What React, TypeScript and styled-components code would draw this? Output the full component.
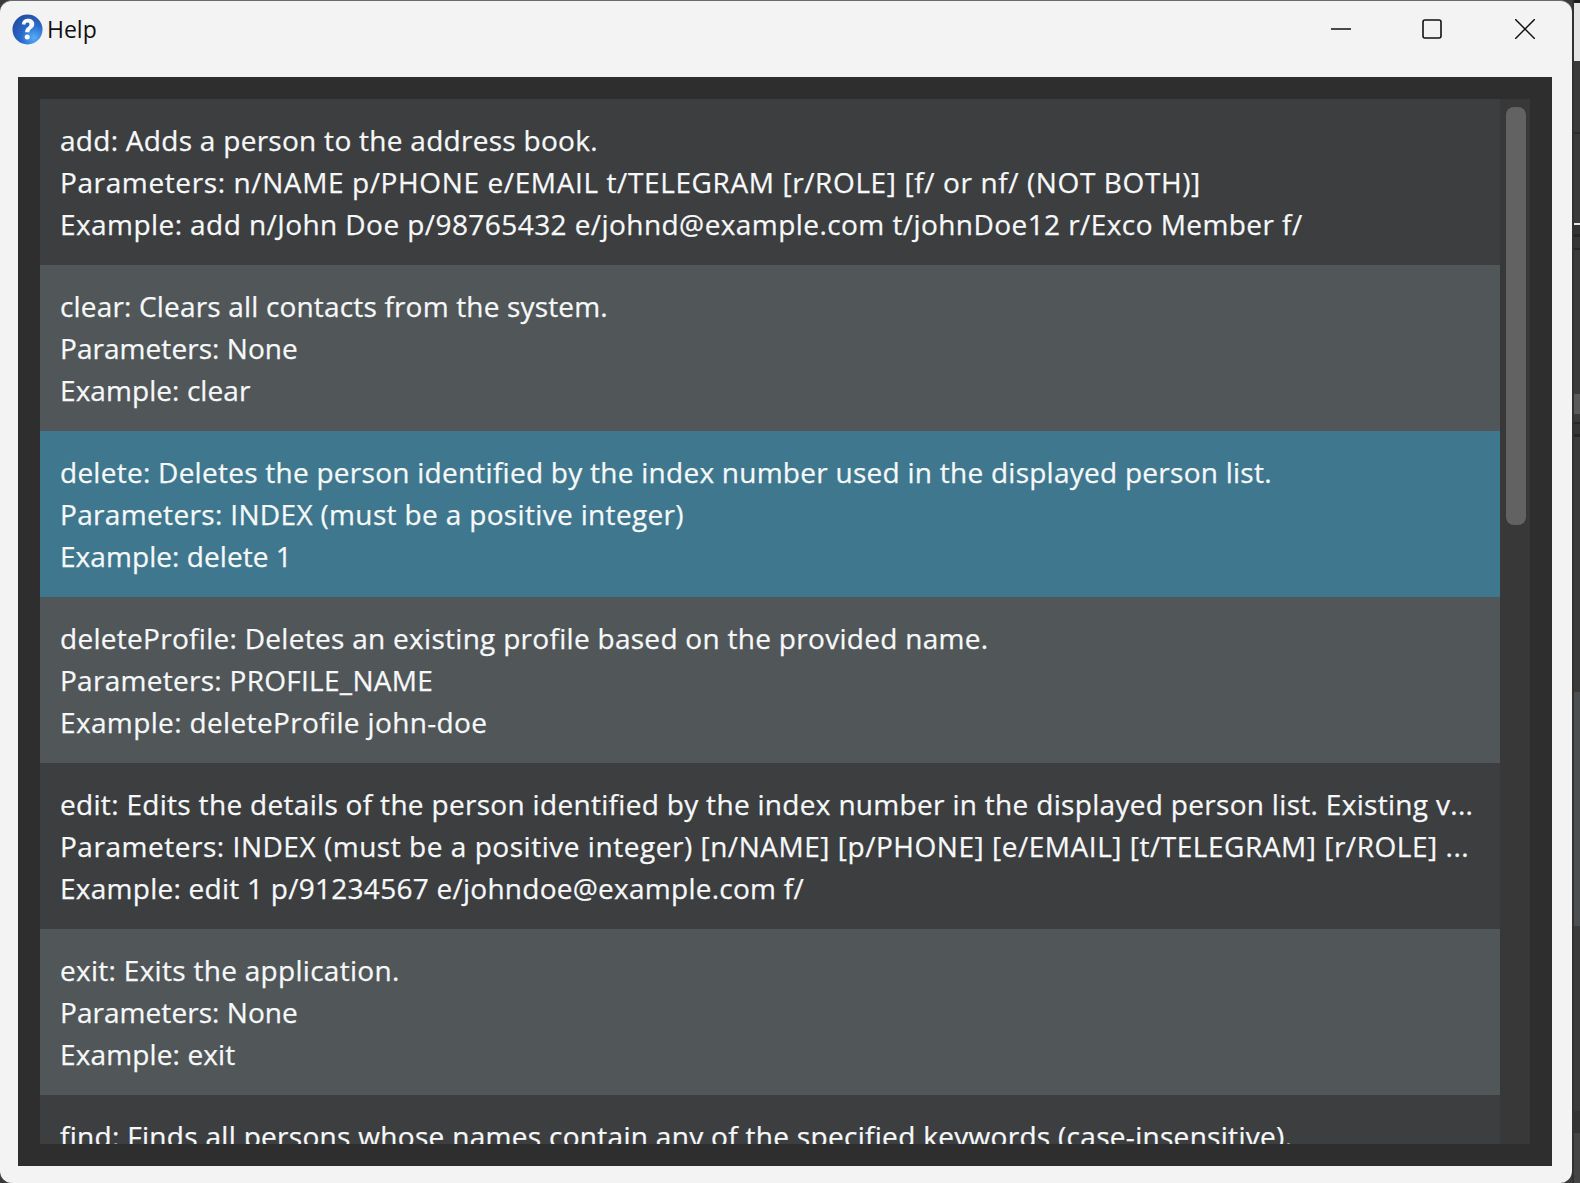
import React from "react";
import styled, { createGlobalStyle } from "styled-components";

const Global = createGlobalStyle`
  html, body { margin: 0; padding: 0; background: #3a3a3a; }
  body { width: 1580px; height: 1183px; overflow: hidden; }
`;

const Desktop = styled.div`
  width: 1580px;
  height: 1183px;
  background: #3a3a3a;
  display: flex;
`;

const Win = styled.div`
  width: 1572px;
  height: 1183px;
  background: #f3f3f3;
  border-radius: 12px;
  border-top: 1px solid #6b6b6b;
  box-sizing: border-box;
  display: flex;
  flex-direction: column;
  overflow: hidden;
`;

const TitleBar = styled.div`
  height: 56px;
  display: flex;
  align-items: center;
  padding-left: 12px;
  flex: none;
`;

const Title = styled.span`
  font: 23px "Open Sans", sans-serif;
  color: #111;
  margin-left: 4px;
  flex: 1;
`;

const Controls = styled.div`
  display: flex;
  align-items: center;
  padding-right: 37px;
`;

const Control = styled.svg<{ $gap?: number }>`
  display: block;
  width: 20px;
  height: 20px;
  margin-left: ${(p) => p.$gap ?? 0}px;
`;

const Panel = styled.div`
  margin: 20px 20px 17px 18px;
  flex: 1;
  background: #2e2e2e;
  padding: 22px;
  display: flex;
  min-height: 0;
`;

const List = styled.div`
  flex: 1;
  display: flex;
  background: #383838;
  min-height: 0;
`;

const Rows = styled.div`
  width: 1460px;
  overflow: hidden;
`;

const Row = styled.div<{ $kind: "odd" | "even" | "sel" }>`
  height: 166px;
  box-sizing: border-box;
  padding: 20px 20px 0;
  background: ${(p) => (p.$kind === "sel" ? "#3f788e" : p.$kind === "even" ? "#515658" : "#3c3e40")};
`;

const Line = styled.div<{ $ls: number }>`
  font: 28px/42px "Open Sans", sans-serif;
  letter-spacing: ${(p) => p.$ls}px;
  color: #f6f8fa;
  -webkit-text-stroke: 0.25px #f6f8fa;
  white-space: nowrap;
`;

const Track = styled.div`
  flex: 1;
  padding: 8px 4px 0 6px;
`;

const Thumb = styled.div`
  height: 418px;
  background: #626262;
  border-radius: 8px;
`;

const Strip = styled.div`
  flex: 1;
  display: flex;
  flex-direction: column;
  border-left: 2px solid rgba(0, 0, 0, 0.14);
`;

const Band = styled.div<{ $h: number; $c: string }>`
  height: ${(p) => p.$h}px;
  background: ${(p) => p.$c};
  flex: none;
`;

const bands: [number, string][] = [
  [3, "#1c1c1c"],
  [58, "#e4e4e4"],
  [71, "#3a3a3a"],
  [2, "#2c2c2c"],
  [89, "#3a3a3a"],
  [2, "#e8e8e8"],
  [9, "#333333"],
  [3, "#262626"],
  [11, "#353535"],
  [2, "#262626"],
  [144, "#3a3a3a"],
  [20, "#5a5a5a"],
  [8, "#3a3a3a"],
  [2, "#262626"],
  [10, "#353535"],
  [3, "#262626"],
  [255, "#3a3a3a"],
  [234, "#4b4f51"],
  [185, "#3a3a3a"],
  [22, "#333333"],
  [50, "#444444"],
];

type L = [string, number];

const data: L[][] = [
  [["add: Adds a person to the address book.", 0.28], ["Parameters: n/NAME p/PHONE e/EMAIL t/TELEGRAM [r/ROLE] [f/ or nf/ (NOT BOTH)]", 0.61], ["Example: add n/John Doe p/98765432 e/johnd@example.com t/johnDoe12 r/Exco Member f/", 0.43]],
  [["clear: Clears all contacts from the system.", 0.17], ["Parameters: None", 0.05], ["Example: clear", 0.07]],
  [["delete: Deletes the person identified by the index number used in the displayed person list.", 0.26], ["Parameters: INDEX (must be a positive integer)", 0.34], ["Example: delete 1", 0.06]],
  [["deleteProfile: Deletes an existing profile based on the provided name.", 0.29], ["Parameters: PROFILE_NAME", 0.28], ["Example: deleteProfile john-doe", 0.36]],
  [["edit: Edits the details of the person identified by the index number in the displayed person list. Existing v...", 0.31], ["Parameters: INDEX (must be a positive integer) [n/NAME] [p/PHONE] [e/EMAIL] [t/TELEGRAM] [r/ROLE] ...", 0.53], ["Example: edit 1 p/91234567 e/johndoe@example.com f/", 0.26]],
  [["exit: Exits the application.", 0.29], ["Parameters: None", 0.05], ["Example: exit", 0.13]],
  [["find: Finds all persons whose names contain any of the specified keywords (case-insensitive).", 0.3]],
];

function HelpIcon() {
  return (
    <svg width="31" height="31" viewBox="0 0 32 32">
      <defs>
        <radialGradient id="g" cx="0.72" cy="0.78" r="0.8">
          <stop offset="0" stopColor="#55aef8" />
          <stop offset="0.55" stopColor="#2a68cc" />
          <stop offset="1" stopColor="#2450a8" />
        </radialGradient>
      </defs>
      <circle cx="16" cy="16" r="15.5" fill="url(#g)" />
      <path d="M10 10.5C10.6 6.8 13.2 5 16.6 5c3.7 0 6.4 2 6.4 5.4 0 2.6-1.6 3.8-3.2 5-1.3 1-1.9 1.7-1.9 3.4h-4.3c0-2.8 1-4.1 2.6-5.3 1.2-.9 1.9-1.5 1.9-2.7 0-1.2-.9-1.9-2-1.9-1.4 0-2.2.9-2.4 2.3z" fill="#fff" />
      <circle cx="15.7" cy="23.8" r="2.6" fill="#fff" />
    </svg>
  );
}

export default function App() {
  return (
    <Desktop>
      <Global />
      <Win>
        <TitleBar>
          <HelpIcon />
          <Title>Help</Title>
          <Controls>
            <Control viewBox="0 0 20 20"><path d="M0 10h20" stroke="#111" strokeWidth="1.6" /></Control>
            <Control $gap={71} viewBox="0 0 20 20"><rect x="1" y="1" width="18" height="18" rx="2" fill="none" stroke="#111" strokeWidth="1.6" /></Control>
            <Control $gap={73} viewBox="0 0 20 20"><path d="M0 0l20 20M20 0L0 20" stroke="#111" strokeWidth="1.5" /></Control>
          </Controls>
        </TitleBar>
        <Panel>
          <List>
            <Rows>
              {data.map((r, i) => (
                <Row key={r[0][0]} $kind={i === 2 ? "sel" : i % 2 ? "even" : "odd"}>
                  {r.map(([text, ls]) => (<Line key={text} $ls={ls}>{text}</Line>))}
                </Row>
              ))}
            </Rows>
            <Track><Thumb /></Track>
          </List>
        </Panel>
      </Win>
      <Strip>
        {bands.map(([h, c], i) => (<Band key={i} $h={h} $c={c} />))}
      </Strip>
    </Desktop>
  );
}
